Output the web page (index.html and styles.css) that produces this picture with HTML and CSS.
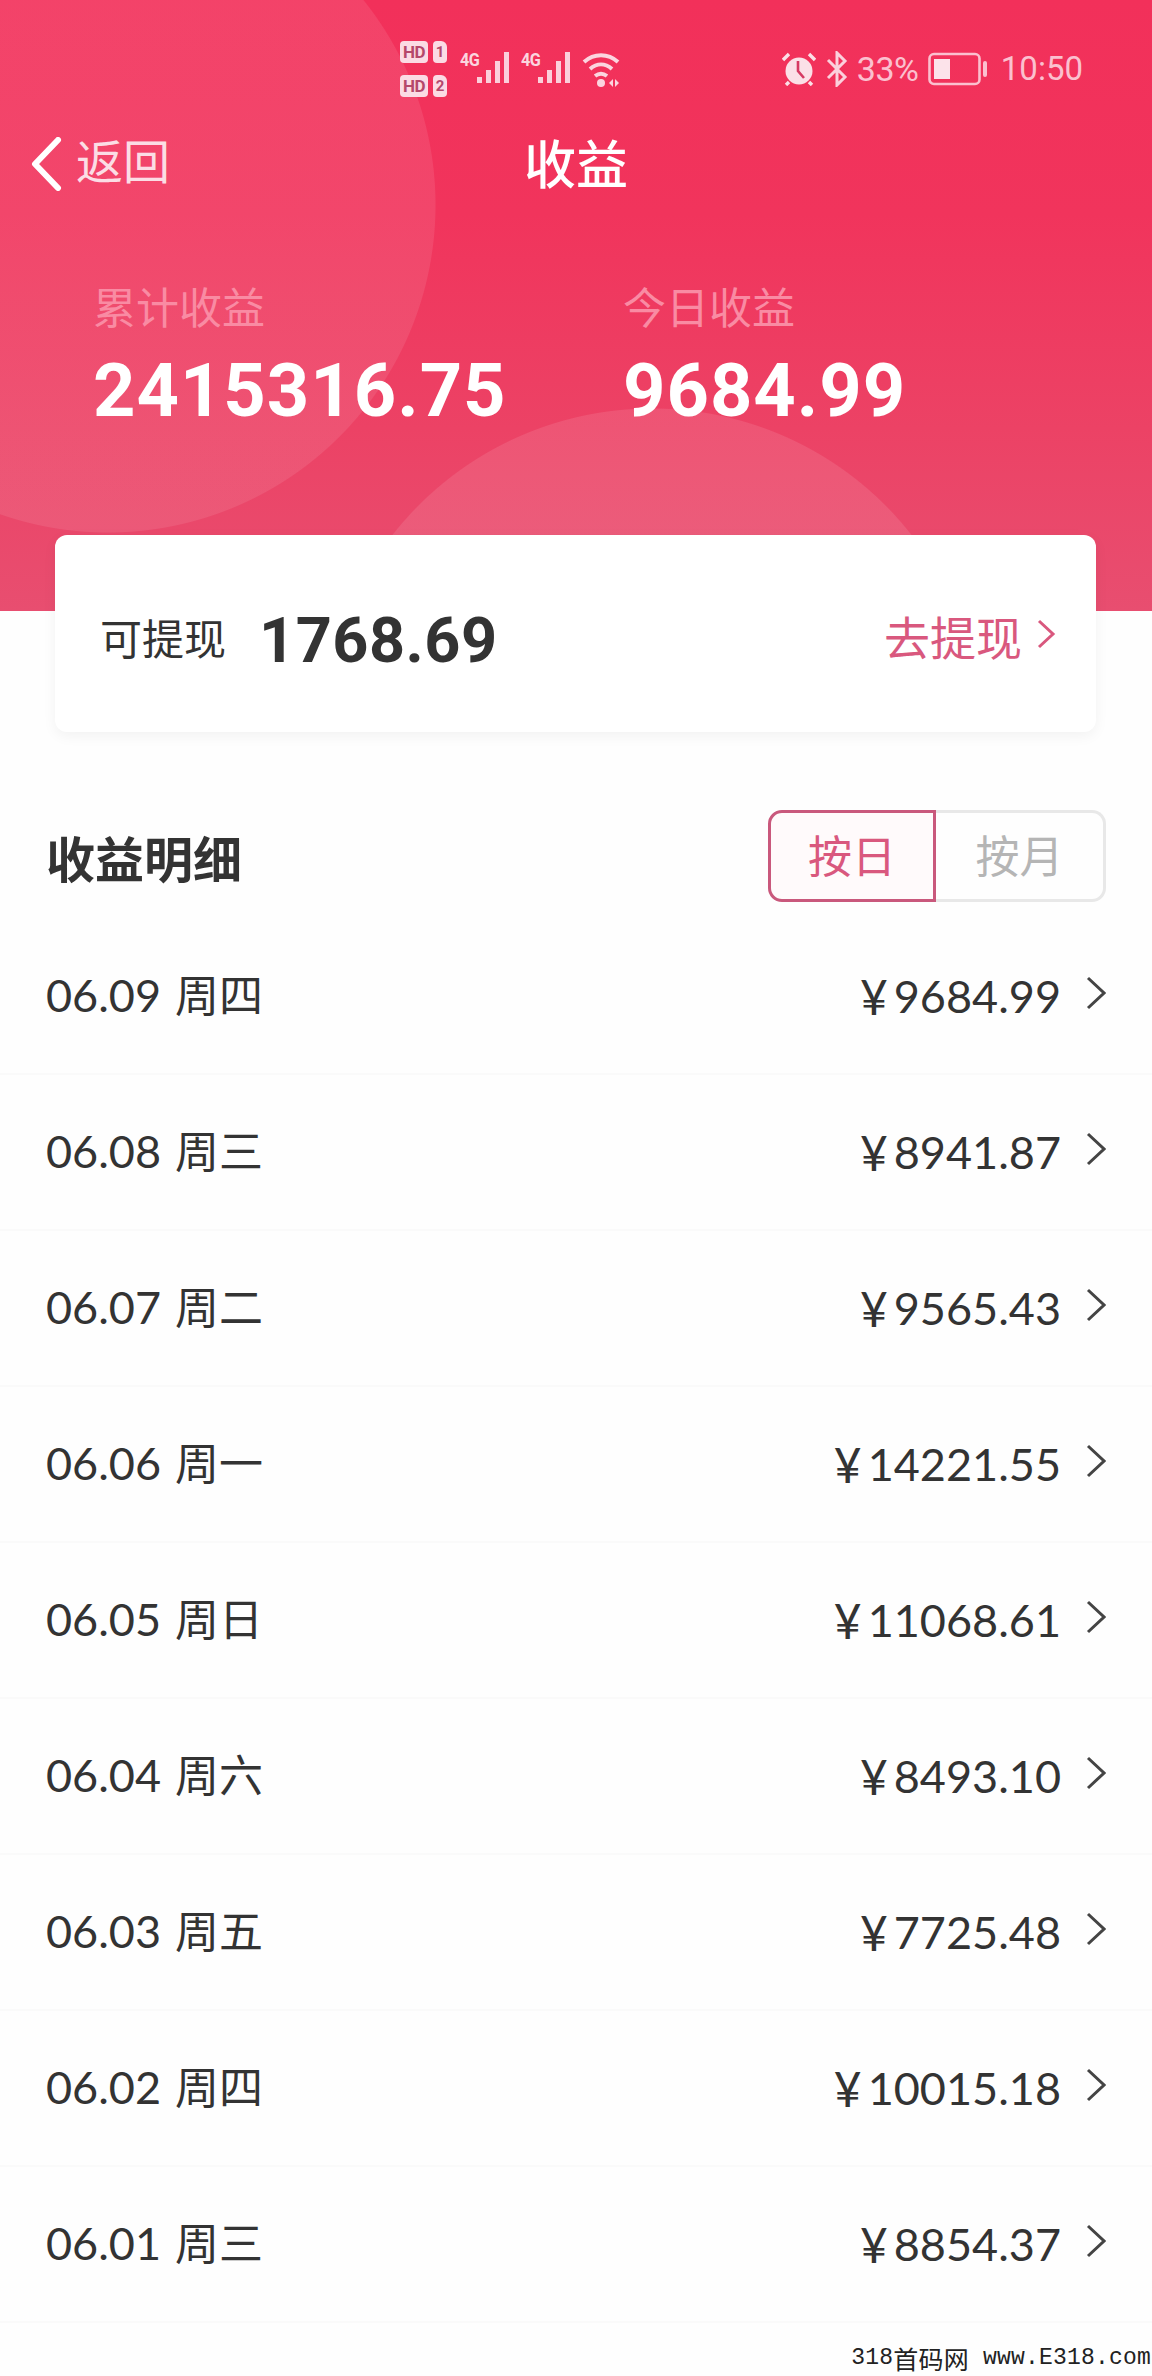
FILE: index.html
```html
<!DOCTYPE html>
<html lang="zh-CN">
<head>
<meta charset="utf-8">
<title>收益</title>
<link rel="stylesheet" href="styles.css">
</head>
<body>
<div class="page">
  <header class="hero">
    <div class="status">
      <div class="sims">
        <div class="sim"><span class="hd">HD</span><span class="num">1</span></div>
        <div class="sim"><span class="hd">HD</span><span class="num">2</span></div>
      </div>
      <div class="signal"><span class="net">4G</span>
        <svg class="bars" viewBox="0 0 34 32"><path d="M0 25h5v6H0zM9 18h5v13H9zM18 9h5v22h-5zM27 0h5v31h-5z"/></svg>
      </div>
      <div class="signal"><span class="net">4G</span>
        <svg class="bars" viewBox="0 0 34 32"><path d="M0 25h5v6H0zM9 18h5v13H9zM18 9h5v22h-5zM27 0h5v31h-5z"/></svg>
      </div>
      <svg class="wifi" viewBox="0 0 38 36"><path d="M2 10C12 1 26 1 36 10M8 17c7-6 15-6 22 0M13 24c4-3 8-3 12 0" /><circle cx="19" cy="31" r="4"/><path class="wifi-fill" d="M27 31l4-4v8zM33 27l4 4-4 4z"/></svg>
      <div class="status-right">
        <svg class="alarm" viewBox="0 0 34 34"><circle cx="17" cy="19" r="13.5" fill="#fbe0e7"/><path d="M1 8l6-6M33 8l-6-6M7 30l-3 3M27 30l3 3" stroke="#fbe0e7" stroke-width="3.4" fill="none"/><path d="M16 9v10l6 7" stroke="#d63a62" stroke-width="2.6" fill="none"/></svg>
        <svg class="bt" viewBox="0 0 24 36"><path d="M3 9l17 17-8 8V2l8 8L3 27" stroke="#fbd0dc" stroke-width="3" fill="none"/></svg>
        <span class="pct">33%</span>
        <svg class="battery" viewBox="0 0 60 34"><rect x="1.5" y="2" width="50" height="30" rx="4.5" fill="none" stroke="#fbc0cf" stroke-width="2.6"/><rect x="6" y="7" width="16" height="20" fill="#fce3ea"/><rect x="55" y="9" width="4" height="16" rx="2" fill="#fbc0cf"/></svg>
        <span class="clock">10:50</span>
      </div>
    </div>
    <nav class="nav">
      <div class="back">
        <svg class="back-icon" viewBox="0 0 32 54"><path d="M28 3L5 27l23 24" /></svg>
        <span>返回</span>
      </div>
      <h1 class="title">收益</h1>
      <div class="nav-end"></div>
    </nav>
    <div class="stats">
      <div class="stat stat-total">
        <div class="stat-label">累计收益</div>
        <div class="stat-value">2415316.75</div>
      </div>
      <div class="stat">
        <div class="stat-label">今日收益</div>
        <div class="stat-value">9684.99</div>
      </div>
    </div>
  </header>

  <section class="card">
    <div class="card-left">
      <span class="card-label">可提现</span>
      <span class="card-value">1768.69</span>
    </div>
    <div class="card-link">
      <span>去提现</span>
      <svg class="card-chevron" viewBox="0 0 20 32"><path d="M3 3l14 13L3 29"/></svg>
    </div>
  </section>

  <section class="detail-head">
    <h2 class="detail-title">收益明细</h2>
    <div class="toggle">
      <div class="toggle-item active">按日</div>
      <div class="toggle-item">按月</div>
    </div>
  </section>

  <ul class="rows">
    <li class="row"><span class="date"><b>06.09</b>周四</span><span class="amount"><i>¥</i>9684.99<svg class="chev" viewBox="0 0 20 34"><path d="M2 2l16 15L2 32"/></svg></span></li>
    <li class="row"><span class="date"><b>06.08</b>周三</span><span class="amount"><i>¥</i>8941.87<svg class="chev" viewBox="0 0 20 34"><path d="M2 2l16 15L2 32"/></svg></span></li>
    <li class="row"><span class="date"><b>06.07</b>周二</span><span class="amount"><i>¥</i>9565.43<svg class="chev" viewBox="0 0 20 34"><path d="M2 2l16 15L2 32"/></svg></span></li>
    <li class="row"><span class="date"><b>06.06</b>周一</span><span class="amount"><i>¥</i>14221.55<svg class="chev" viewBox="0 0 20 34"><path d="M2 2l16 15L2 32"/></svg></span></li>
    <li class="row"><span class="date"><b>06.05</b>周日</span><span class="amount"><i>¥</i>11068.61<svg class="chev" viewBox="0 0 20 34"><path d="M2 2l16 15L2 32"/></svg></span></li>
    <li class="row"><span class="date"><b>06.04</b>周六</span><span class="amount"><i>¥</i>8493.10<svg class="chev" viewBox="0 0 20 34"><path d="M2 2l16 15L2 32"/></svg></span></li>
    <li class="row"><span class="date"><b>06.03</b>周五</span><span class="amount"><i>¥</i>7725.48<svg class="chev" viewBox="0 0 20 34"><path d="M2 2l16 15L2 32"/></svg></span></li>
    <li class="row"><span class="date"><b>06.02</b>周四</span><span class="amount"><i>¥</i>10015.18<svg class="chev" viewBox="0 0 20 34"><path d="M2 2l16 15L2 32"/></svg></span></li>
    <li class="row"><span class="date"><b>06.01</b>周三</span><span class="amount"><i>¥</i>8854.37<svg class="chev" viewBox="0 0 20 34"><path d="M2 2l16 15L2 32"/></svg></span></li>
  </ul>

  <footer class="mark"><span>318</span><span class="mark-cjk">首码网</span><span>&nbsp;www.E318.com</span></footer>
</div>
</body>
</html>
```

FILE: styles.css
```css
* { box-sizing: border-box; }
html, body { margin: 0; padding: 0; }
body {
  background: #fefefe;
  font-family: "Noto Sans CJK SC", "Noto Sans", sans-serif;
  color: #333;
}
.page {
  width: 1152px;
  height: 2376px;
  overflow: hidden;
  display: flex;
  flex-direction: column;
}

/* hero */
.hero {
  height: 611px;
  flex: none;
  background:
    radial-gradient(circle 328px at 108px 205px, rgba(255,255,255,.09) 99.7%, rgba(255,255,255,0) 100%),
    radial-gradient(circle 330px at 652px 738px, rgba(255,255,255,.1) 99.7%, rgba(255,255,255,0) 100%),
    linear-gradient(180deg, #f2305a 0%, #f1345c 35%, #ec4265 70%, #e84e70 100%);
  padding-top: 38px;
}
.status {
  height: 60px;
  display: flex;
  align-items: flex-start;
  padding-left: 400px;
  color: #fbd5df;
}
.sims { width: 50px; margin-top: 3px; display: flex; flex-direction: column; gap: 12px; }
.sim { display: flex; gap: 5px; height: 22px; }
.hd, .num {
  background: #fbdbe4;
  color: #b5486b;
  font: 700 17px/22px "Roboto", sans-serif;
  border-radius: 4px;
  text-align: center;
}
.hd { width: 28px; letter-spacing: -.5px; }
.num { width: 14px; font-size: 15px; border-top-right-radius: 6px; }
.signal { width: 61px; height: 36px; margin-left: 10px; display: flex; align-items: flex-start; margin-top: 14px; }
.signal + .signal { margin-left: 0; }
.net {
  font: 700 18px/16px "Roboto", sans-serif;
  color: #fbd5df;
  width: 17px;
  letter-spacing: -.5px;
  transform: scaleX(.9);
  transform-origin: left;
}
.bars { width: 34px; height: 32px; fill: #fbcfdb; }
.wifi { width: 38px; height: 36px; margin-top: 14px; fill: #fbd5df; stroke: #fbd5df; }
.wifi path { fill: none; stroke-width: 4; }
.wifi circle { stroke: none; }
.wifi .wifi-fill { fill: #fbd5df; stroke: none; }
.status-right {
  margin-left: auto;
  padding-right: 69px;
  display: flex;
  align-items: center;
  height: 60px;
  margin-top: 1px;
}
.alarm { width: 34px; height: 34px; }
.bt { width: 24px; height: 36px; margin-left: 9px; }
.pct { font: 400 34px/40px "Roboto", sans-serif; color: #fbc0cf; margin-left: 8px; letter-spacing: -.5px; width: 71px; }
.battery { width: 60px; height: 34px; }
.clock { font: 400 33px/40px "Roboto", sans-serif; color: #fbc0cf; margin-left: 13px; }

.nav {
  display: grid;
  grid-template-columns: 1fr auto 1fr;
  align-items: center;
  height: 72px;
  margin-top: 28px;
  color: #fff;
}
.back { display: flex; align-items: center; padding-left: 30px; font-size: 47px; color: #fbdde5; gap: 14px; }
.back-icon { width: 32px; height: 54px; fill: none; stroke: #fff; stroke-width: 6; stroke-linecap: round; stroke-linejoin: round; margin-top: 3px; }
.back span { line-height: 66px; padding-bottom: 6px; }
.title { margin: 0; font-size: 52px; font-weight: 500; line-height: 72px; }
.stats { display: flex; padding-left: 93px; margin-top: 79px; }
.stat-total { width: 530px; }
.stat-label { font-size: 43px; line-height: 56px; color: #f98ba3; }
.stat-value { font: 700 74px/90px "Roboto", sans-serif; color: #fff; letter-spacing: 1px; margin-top: 13px; }

/* card */
.card {
  flex: none;
  width: 1041px;
  height: 197px;
  margin: -76px 0 0 55px;
  padding: 0 40px 0 45px;
  background: #fff;
  border-radius: 12px;
  box-shadow: 0 4px 14px rgba(0,0,0,.05);
  display: flex;
  align-items: center;
  justify-content: space-between;
}
.card-left { display: flex; align-items: center; gap: 33px; }
.card-label { font-size: 42px; color: #333; padding-top: 6px; }
.card-value { font: 700 63px/80px "Roboto", sans-serif; color: #333; letter-spacing: .5px; padding-top: 14px; }
.card-link { display: flex; align-items: center; gap: 14px; color: #d9587e; font-size: 46px; }
.card-link span { padding-top: 2px; }
.card-chevron { width: 20px; height: 32px; fill: none; stroke: #d9587e; stroke-width: 3; }

/* detail head */
.detail-head {
  flex: none;
  height: 92px;
  margin-top: 78px;
  padding: 0 46px;
  display: flex;
  align-items: center;
  justify-content: space-between;
}
.detail-title { margin: 0; font-size: 49px; font-weight: 700; color: #333; }
.toggle { display: flex; height: 92px; width: 338px; }
.toggle-item {
  flex: 1;
  font-size: 44px;
  line-height: 82px;
  text-align: center;
  color: #b5b5b5;
  border: 3px solid #e8e8e8;
  border-left: 0;
  border-radius: 0 14px 14px 0;
}
.toggle-item.active {
  flex: none;
  width: 168px;
  color: #d9587e;
  border: 3.5px solid #c9587c;
  border-radius: 14px 0 0 14px;
  background: #fffafb;
}

/* rows */
.rows { list-style: none; margin: 17px 0 0; padding: 0; flex: none; }
.row {
  height: 156px;
  display: flex;
  align-items: center;
  justify-content: space-between;
  padding: 0 46px 0 46px;
  border-bottom: 2px solid #fafafa;
  font-size: 44px;
  color: #333;
}
.date { padding-bottom: 6px; }
.date b { font: 400 45px "Lato", sans-serif; margin-right: 14px; }
.amount { display: flex; align-items: center; font: 400 45px "Lato", sans-serif; color: #333; }
.amount i { font-style: normal; font-size: 48px; margin-right: 6px; }
.chev { width: 20px; height: 34px; margin: 0 0 6px 25px; fill: none; stroke: #444; stroke-width: 3; }

/* watermark */
.mark {
  flex: none;
  margin-top: auto;
  margin-bottom: 3px;
  height: 30px;
  padding-right: 1px;
  display: flex;
  justify-content: flex-end;
  align-items: center;
  font: 400 23px/30px "Liberation Mono", "Noto Sans CJK SC", monospace;
  letter-spacing: .2px;
  color: #222;
  white-space: pre;
}
.mark-cjk { font-size: 25px; line-height: 30px; font-family: "Noto Sans CJK SC", sans-serif; }
```
